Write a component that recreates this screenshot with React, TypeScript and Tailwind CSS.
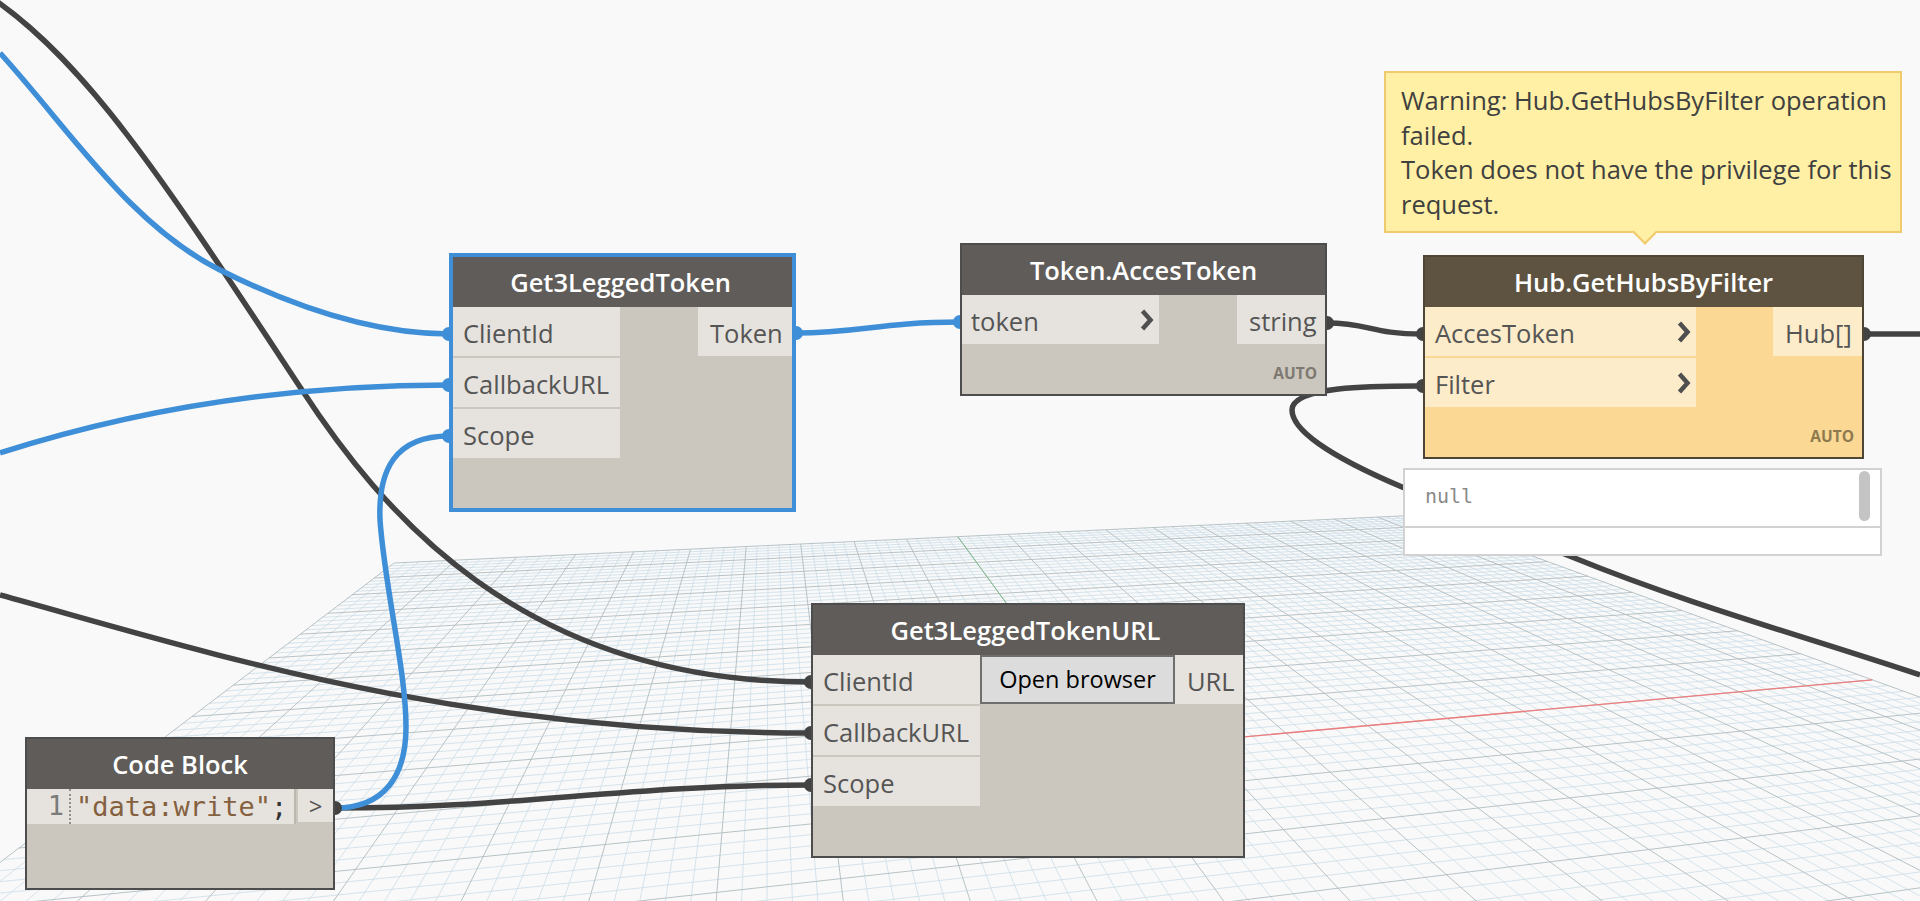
import type { ReactNode } from "react";
import clsx from "clsx";

// perspective floor grid: unit square mapped through two vanishing points
const VP_U = [6090, 297];
const VP_V = [769, 278];
const ORIGIN = [394, 563];
const A = 0.2197;
const B = -1.0;

const project = (u: number, v: number) => {
  const d = 1 + A * u + B * v;
  return {
    x: (A * u * VP_U[0] + B * v * VP_V[0] + ORIGIN[0]) / d,
    y: (A * u * VP_U[1] + B * v * VP_V[1] + ORIGIN[1]) / d,
  };
};

const seg = (u1: number, v1: number, u2: number, v2: number) => {
  const p = project(u1, v1);
  const q = project(u2, v2);
  return `M${p.x.toFixed(1)} ${p.y.toFixed(1)}L${q.x.toFixed(1)} ${q.y.toFixed(1)}`;
};

const gridPaths = () => {
  let minor = "";
  let major = "";
  for (let i = 0; i <= 100; i++) {
    const t = i / 100;
    const line = seg(t, 0, t, 0.96) + (t <= 0.96 ? seg(0, t, 1, t) : "");
    if (i % 5 === 0) major += line;
    else minor += line;
  }
  return { minor, major };
};

const Floor = () => {
  const { minor, major } = gridPaths();
  return (
    <>
      <path d={minor} fill="none" stroke="#cbdde8" strokeWidth={0.8} />
      <path d={major} fill="none" stroke="#b0bcc1" strokeWidth={0.9} />
      <path d={seg(0.5, 0, 0.5, 0.5)} stroke="#7fb98a" strokeWidth={1} />
      <path d={seg(0.5, 0.5, 1, 0.5)} stroke="#ee7d7d" strokeWidth={1.3} />
    </>
  );
};

const BLUE = "#3f8fd8";
const DARK = "#434343";

const Wires = () => (
  <g fill="none" strokeWidth={5.5}>
    <path stroke={DARK} d="M-8 -2C90 65 170 190 300 387C380 510 520 682 811 682" />
    <path stroke={DARK} d="M0 595C200 650 450 733 811 733" />
    <path stroke={DARK} d="M335 808C520 808 620 785 811 785" />
    <path stroke={DARK} d="M1327 323C1370 323 1370 334 1423 334" />
    <path
      stroke={DARK}
      d="M1423 386C1380 386 1292 385 1292 410C1292 435 1350 465 1402 487C1460 510 1520 537 1572 557C1690 605 1800 635 1920 675"
    />
    <path stroke={DARK} d="M1864 334L1920 334" />
    <path stroke={BLUE} d="M0 53C70 130 130 225 220 270C290 305 370 334 449 334" />
    <path stroke={BLUE} d="M0 453C150 405 300 385 449 385" />
    <path stroke={BLUE} d="M449 436C395 436 378 470 380 520C385 590 406 670 406 727C406 775 385 808 335 808" />
    <path stroke={BLUE} d="M796 333C860 333 880 322 960 322" />
    {/* port bumps */}
    <g stroke="none" fill={BLUE}>
      <ellipse cx={449} cy={334} rx={7} ry={7} />
      <ellipse cx={449} cy={385} rx={7} ry={7} />
      <ellipse cx={449} cy={436} rx={7} ry={7} />
      <ellipse cx={796} cy={333} rx={7} ry={7} />
      <ellipse cx={960} cy={322} rx={7} ry={7} />
    </g>
    <g stroke="none" fill={DARK}>
      <ellipse cx={335} cy={808} rx={7} ry={7} />
      <ellipse cx={811} cy={682} rx={7} ry={7} />
      <ellipse cx={811} cy={733} rx={7} ry={7} />
      <ellipse cx={811} cy={785} rx={7} ry={7} />
      <ellipse cx={1327} cy={323} rx={7} ry={7} />
      <ellipse cx={1423} cy={334} rx={7} ry={7} />
      <ellipse cx={1423} cy={386} rx={7} ry={7} />
      <ellipse cx={1864} cy={334} rx={7} ry={7} />
    </g>
  </g>
);

const Chevron = () => (
  <svg width="15" height="22" viewBox="0 0 15 22" className="shrink-0">
    <path d="M2.5 2l8 9-8 9" fill="none" stroke="#4f4f4f" strokeWidth={4.5} />
  </svg>
);

type PortProps = {
  label: string;
  chevron?: boolean;
  warn?: boolean;
  className?: string;
};

const Port = ({ label, chevron, warn, className }: PortProps) => (
  <div
    className={clsx(
      "flex h-[49px] items-center justify-between text-[25.5px] text-[#555555]",
      warn ? "bg-[#fdecca]" : "bg-[#e6e3de]",
      className,
    )}
  >
    <span className="pt-[3px]">{label}</span>
    {chevron && <Chevron />}
  </div>
);

type NodeProps = {
  title: string;
  className: string;
  headerClass?: string;
  children: ReactNode;
};

const Node = ({ title, className, headerClass, children }: NodeProps) => (
  <div className={clsx("absolute flex flex-col", className)}>
    <div
      className={clsx(
        "flex h-[50px] shrink-0 items-center justify-center text-[25.5px] font-semibold text-white",
        headerClass ?? "bg-[#5f5c59]",
      )}
    >
      {title}
    </div>
    {children}
  </div>
);

const Auto = ({ warn }: { warn?: boolean }) => (
  <span
    className={clsx(
      "mt-auto mr-[8px] mb-[9px] self-end text-[15.5px] font-bold",
      warn ? "text-[#8f7a50]" : "text-[#7d7971]",
    )}
  >
    AUTO
  </span>
);

export default function App() {
  return (
    <div className="relative h-[901px] w-[1920px] overflow-hidden bg-[#f9f9f9] font-['Open_Sans',sans-serif]">
      <svg className="absolute inset-0" width="1920" height="901">
        <Floor />
        <Wires />
      </svg>

      {/* Get3LeggedToken */}
      <Node
        title="Get3LeggedToken"
        headerClass="bg-[#5f5c59] pr-[4px]"
        className="top-[253px] left-[449px] h-[259px] w-[347px] border-[4px] border-[#3f8fd8] bg-[#cbc7bf]"
      >
        <div className="flex justify-between">
          <div className="flex w-[167px] flex-col gap-[2px]">
            <Port label="ClientId" className="pl-[10px]" />
            <Port label="CallbackURL" className="pl-[10px]" />
            <Port label="Scope" className="pl-[10px]" />
          </div>
          <Port label="Token" className="w-[94px] pl-[12px]" />
        </div>
      </Node>

      {/* Token.AccesToken */}
      <Node
        title="Token.AccesToken"
        className="top-[243px] left-[960px] h-[153px] w-[367px] border-2 border-[#4d4d4d] bg-[#cbc7bf]"
      >
        <div className="flex justify-between">
          <Port label="token" chevron className="w-[197px] pr-[4px] pl-[9px]" />
          <Port label="string" className="w-[88px] pl-[12px]" />
        </div>
        <Auto />
      </Node>

      {/* Hub.GetHubsByFilter */}
      <Node
        title="Hub.GetHubsByFilter"
        headerClass="bg-[#5e5340]"
        className="top-[255px] left-[1423px] h-[204px] w-[441px] border-2 border-[#4d4636] bg-[#fbd994]"
      >
        <div className="flex justify-between">
          <div className="flex w-[271px] flex-col gap-[2px]">
            <Port warn label="AccesToken" chevron className="pr-[4px] pl-[10px]" />
            <Port warn label="Filter" chevron className="pr-[4px] pl-[10px]" />
          </div>
          <Port warn label="Hub[]" className="w-[89px] pl-[12px]" />
        </div>
        <Auto warn />
      </Node>

      {/* warning bubble */}
      <div className="absolute top-[71px] left-[1384px] h-[162px] w-[518px] border-2 border-[#f0cb6e] bg-[#fff0a5] py-[10px] pr-[4px] pl-[15px] text-[25.5px] leading-[34.7px] text-[#404040]">
        <p>Warning: Hub.GetHubsByFilter operation failed.</p>
        <p>Token does not have the privilege for this request.</p>
        <div className="absolute bottom-[-10px] left-[250px] h-[18px] w-[18px] rotate-45 border-r-2 border-b-2 border-[#f0cb6e] bg-[#fff0a5]" />
      </div>

      {/* value preview */}
      <div className="absolute top-[468px] left-[1403px] flex h-[88px] w-[479px] flex-col border-2 border-[#d2d2d2] bg-white">
        <div className="relative flex h-[58px] items-center border-b-2 border-[#d2d2d2] pb-[4px] pl-[20px] font-['DejaVu_Sans_Mono',monospace] text-[20px] text-[#8a8a8a]">
          null
          <div className="absolute top-[1px] right-[10px] h-[50px] w-[11px] rounded-full bg-[#c4c4c4]" />
        </div>
      </div>

      {/* Get3LeggedTokenURL */}
      <Node
        title="Get3LeggedTokenURL"
        headerClass="bg-[#5f5c59] pr-[5px]"
        className="top-[603px] left-[811px] h-[255px] w-[434px] border-2 border-[#4d4d4d] bg-[#cbc7bf]"
      >
        <div className="flex">
          <div className="flex w-[167px] flex-col gap-[2px]">
            <Port label="ClientId" className="pl-[10px]" />
            <Port label="CallbackURL" className="pl-[10px]" />
            <Port label="Scope" className="pl-[10px]" />
          </div>
          <div className="flex h-[49px] w-[195px] items-center justify-center border-2 border-[#6f6f6f] bg-[#dcdcdc] text-[23.5px] text-black">
            Open browser
          </div>
          <Port label="URL" className="flex-1 pl-[12px]" />
        </div>
      </Node>

      {/* Code Block */}
      <Node
        title="Code Block"
        className="top-[737px] left-[25px] h-[153px] w-[310px] border-2 border-[#4d4d4d] bg-[#cbc7bf]"
      >
        <div className="flex justify-between">
          <div className="flex h-[35px] w-[269px] items-center border-r-2 border-[#bdb9b1] bg-[#e6e3de] font-['DejaVu_Sans_Mono',monospace] text-[27px]">
            <span className="w-[42px] pr-[5px] text-right text-[#7b7b7b]">1</span>
            <span className="h-full border-l-2 border-dotted border-[#8f8f8f] pl-[5px] leading-[36px] text-[#85603f]">
              "data:write"<span className="text-[#333333]">;</span>
            </span>
          </div>
          <div className="flex h-[33px] w-[35px] items-center justify-center bg-[#e6e3de] text-[24px] text-[#555555]">
            &gt;
          </div>
        </div>
      </Node>
    </div>
  );
}
